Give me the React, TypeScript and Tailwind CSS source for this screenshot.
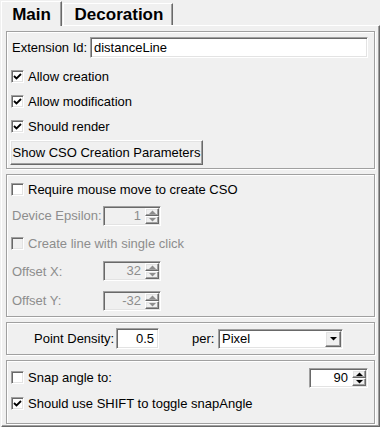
import React from 'react'

const sunken =
  'border border-t-[#a0a0a0] border-l-[#a0a0a0] border-b-white border-r-white shadow-[inset_1px_1px_0_#696969,inset_-1px_-1px_0_#e3e3e3]'
const raised =
  'border border-t-white border-l-white border-b-[#696969] border-r-[#696969] shadow-[inset_-1px_-1px_0_#a0a0a0,inset_1px_1px_0_#e3e3e3]'
const group =
  'border border-[#a0a0a0] shadow-[inset_1px_1px_0_#fff,1px_1px_0_#fff]'

function Check({ checked, disabled }: { checked?: boolean; disabled?: boolean }) {
  return (
    <span className={`${sunken} w-[13px] h-[13px] shrink-0 flex items-center justify-center ${disabled ? 'bg-[#f0f0f0]' : 'bg-white'}`}>
      {checked && (
        <svg width="9" height="9" viewBox="0 0 9 9">
          <path d="M1 4 L3.5 6.5 L8 2" fill="none" stroke="#000" strokeWidth="1.8" />
        </svg>
      )}
    </span>
  )
}

function CheckRow({ label, checked, disabled, h }: { label: string; checked?: boolean; disabled?: boolean; h: string }) {
  return (
    <div className={`flex items-center ${h} pl-[4px]`}>
      <Check checked={checked} disabled={disabled} />
      <span className={`ml-[4px] ${disabled ? 'text-[#8d8d8d]' : 'text-black'}`}>{label}</span>
    </div>
  )
}

function Arrow({ up, color }: { up?: boolean; color: string }) {
  return (
    <svg width="7" height="4" viewBox="0 0 7 4">
      <polygon points={up ? '0,4 3.5,0.5 7,4' : '0,0 7,0 3.5,3.5'} fill={color} />
    </svg>
  )
}

function Spin({ value, disabled, w }: { value: string; disabled?: boolean; w: string }) {
  const c = disabled ? '#8d8d8d' : '#000'
  return (
    <div className={`${sunken} ${w} h-[20px] flex ${disabled ? 'bg-[#f0f0f0]' : 'bg-white'}`}>
      <span className={`flex-1 text-right pr-[3px] leading-[18px] ${disabled ? 'text-[#8d8d8d]' : 'text-black'}`}>{value}</span>
      <div className="w-[16px] flex flex-col p-[1px]">
        <div className={`${raised} flex-1 flex items-center justify-center bg-[#f0f0f0]`}>
          <Arrow up color={c} />
        </div>
        <div className={`${raised} flex-1 flex items-center justify-center bg-[#f0f0f0]`}>
          <Arrow color={c} />
        </div>
      </div>
    </div>
  )
}

function LabelSpin({ label, value, h }: { label: string; value: string; h: string }) {
  return (
    <div className={`flex items-center ${h} pl-[5px]`}>
      <span className="w-[91px] text-[#8d8d8d]">{label}</span>
      <Spin value={value} disabled w="w-[58px]" />
    </div>
  )
}

export default function App() {
  return (
    <div className="w-[380px] h-[427px] bg-[#f0f0f0] text-[13px] leading-none text-black font-['Liberation_Sans',Arial,sans-serif] overflow-hidden">
      {/* tabs */}
      <div className="flex items-end h-[26px] -mb-[1px] relative z-10">
        <div className="ml-[1px] w-[61px] h-[25px] bg-[#f0f0f0] border-l border-t border-r border-l-white border-t-white border-r-[#696969] shadow-[inset_-1px_0_0_#a0a0a0] flex items-center justify-center text-[17px] font-bold">
          Main
        </div>
        <div className="ml-[1px] mb-[1px] w-[110px] h-[22px] border-l border-t border-r border-l-white border-t-white border-r-[#696969] shadow-[inset_-1px_0_0_#a0a0a0] flex items-center justify-center text-[17px] font-bold pl-[2px]">
          Decoration
        </div>
      </div>

      {/* pane */}
      <div className="ml-[1px] w-[379px] h-[402px] border border-t-white border-l-white border-r-[#696969] border-b-[#696969] shadow-[inset_-1px_-1px_0_#a0a0a0] pt-[5px] pl-[4px] pr-[4px] flex flex-col gap-[5px]">
        {/* group 1 */}
        <div className={`${group} h-[138px] flex flex-col`}>
          <div className="flex items-center h-[21px] mt-[5px] pl-[5px] pr-[6px]">
            <span className="w-[78px]">Extension Id:</span>
            <div className={`${sunken} flex-1 h-[21px] bg-white flex items-center pl-[3px]`}>distanceLine</div>
          </div>
          <div className="mt-[6px]">
            <CheckRow label="Allow creation" checked h="h-[25px]" />
            <CheckRow label="Allow modification" checked h="h-[25px]" />
            <CheckRow label="Should render" checked h="h-[25px]" />
          </div>
          <div className="pl-[3px] mt-[1px]">
            <button className={`${raised} w-[193px] h-[25px] bg-[#f0f0f0] text-[13px] text-black`}>
              Show CSO Creation Parameters
            </button>
          </div>
        </div>

        {/* group 2 */}
        <div className={`${group} h-[143px] flex flex-col pt-[2px]`}>
          <CheckRow label="Require mouse move to create CSO" h="h-[25px]" />
          <LabelSpin label="Device Epsilon:" value="1" h="h-[27px]" />
          <CheckRow label="Create line with single click" disabled h="h-[28px]" />
          <LabelSpin label="Offset X:" value="32" h="h-[28px]" />
          <LabelSpin label="Offset Y:" value="-32" h="h-[31px]" />
        </div>

        {/* group 3 */}
        <div className={`${group} h-[33px] flex items-center pl-[27px]`}>
          <span className="w-[82px]">Point Density:</span>
          <div className={`${sunken} w-[43px] h-[21px] bg-white text-right pr-[4px] leading-[19px]`}>0.5</div>
          <span className="ml-[33px] w-[26px]">per:</span>
          <div className={`${sunken} w-[125px] h-[20px] bg-white flex`}>
            <span className="flex-1 pl-[3px] leading-[18px]">Pixel</span>
            <div className="w-[18px] p-[1px] flex">
              <div className={`${raised} flex-1 bg-[#f0f0f0] flex items-center justify-center`}>
                <Arrow color="#000" />
              </div>
            </div>
          </div>
        </div>

        {/* group 4 */}
        <div className={`${group} h-[64px] flex flex-col pt-[3px]`}>
          <div className="flex items-center h-[27px] pl-[4px] pr-[6px]">
            <Check />
            <span className="ml-[4px] flex-1">Snap angle to:</span>
            <Spin value="90" w="w-[59px]" />
          </div>
          <CheckRow label="Should use SHIFT to toggle snapAngle" checked h="h-[25px]" />
        </div>
      </div>
    </div>
  )
}
